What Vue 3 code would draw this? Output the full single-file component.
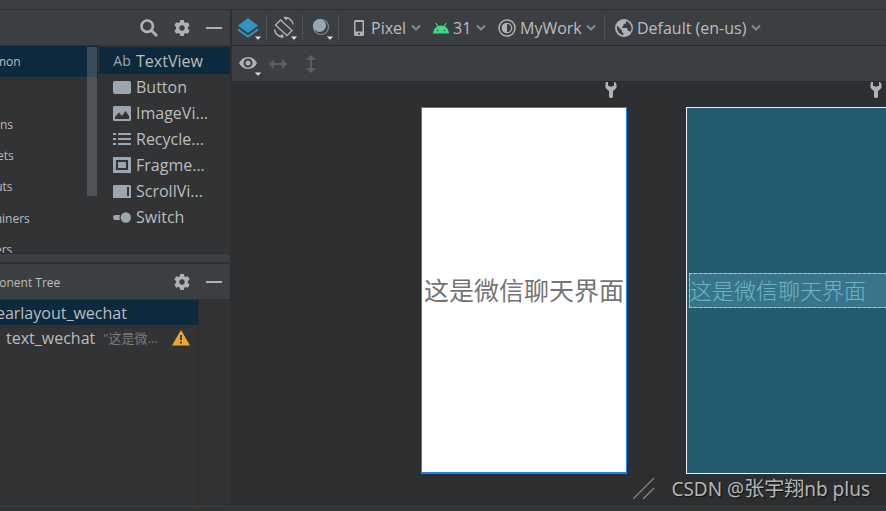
<script setup>
const categories = ['Common', 'Text', 'Buttons', 'Widgets', 'Layouts', 'Containers', 'Helpers']
const components = [
  { name: 'TextView', icon: 'text' },
  { name: 'Button', icon: 'button' },
  { name: 'ImageVi...', icon: 'image' },
  { name: 'Recycle...', icon: 'list' },
  { name: 'Fragme...', icon: 'fragment' },
  { name: 'ScrollVi...', icon: 'scroll' },
  { name: 'Switch', icon: 'switch' }
]
const gear =
  'M7 0h4l.5 2.6 1.6.9L15.600 2.600l2 3.500-2 1.700v2.400l2 1.700-2 3.500-2.500-.9-1.600.9L11 18H7l-.5-2.600-1.600-.9-2.500.9-2-3.500 2-1.700V7.800l-2-1.700 2-3.500 2.500.9 1.600-.9zM9 6a3 3 0 1 0 0 6 3 3 0 0 0 0-6z'
</script>

<template>
  <div class="ide">
    <div class="strip"></div>
    <div class="workspace">
      <aside class="side">
        <header class="head palette-head">
          <button class="tool" aria-label="Search">
            <svg width="18" height="18" viewBox="0 0 18 18"><circle cx="7.200" cy="7.200" r="5.700" fill="none" stroke="#afb1b3" stroke-width="2.600" /><path d="M11.500 11.500l5.500 5.500" stroke="#afb1b3" stroke-width="3" /></svg>
          </button>
          <button class="tool" aria-label="Palette settings">
            <svg width="16" height="16" viewBox="0 0 18 18"><path :d="gear" fill="#afb1b3" fill-rule="evenodd" /></svg>
          </button>
          <button class="tool" aria-label="Hide palette">
            <svg width="16" height="16" viewBox="0 0 16 16"><path d="M0 7h16v2H0z" fill="#afb1b3" /></svg>
          </button>
        </header>
        <div class="palette">
          <div class="categories">
            <ul class="category-list">
              <li v-for="(c, i) in categories" :key="c" :class="{ selected: i === 0 }">
                <button>{{ c }}</button>
              </li>
            </ul>
            <div class="thumb"></div>
          </div>
          <ul class="component-list">
            <li v-for="(c, i) in components" :key="c.name" :class="{ selected: i === 0 }">
              <button>
                <span v-if="c.icon === 'text'" class="ab">Ab</span>
                <svg v-else width="18" height="16" viewBox="0 0 18 16" fill="#9aa7b0">
                  <rect v-if="c.icon === 'button'" y="2" width="18" height="13" rx="2" />
                  <path v-else-if="c.icon === 'image'" fill-rule="evenodd" d="M1 1h16l1 1v13l-1 1H1l-1-1V2zM2 14h14v-3l-3.500-5-3.500 5-3-3.500L2 12z" />
                  <path v-else-if="c.icon === 'list'" d="M0 2h3v2H0zM5 2h13v2H5zM0 7h3v2H0zM5 7h13v2H5zM0 12h3v2H0zM5 12h13v2H5z" />
                  <path v-else-if="c.icon === 'fragment'" fill-rule="evenodd" d="M0 0h18v16H0zM3 3v10h12V3zM5 5h8v6H5z" />
                  <path v-else-if="c.icon === 'scroll'" fill-rule="evenodd" d="M1 2h16l1 1v12H0V3zM14 4v9h2V4z" />
                  <g v-else><circle cx="12.800" cy="8.500" r="5.200" /><path d="M2.500 6H7a7 7 0 0 0 0 5H2.500a2.500 2.500 0 0 1 0-5z" /></g>
                </svg>
                <span>{{ c.name }}</span>
              </button>
            </li>
          </ul>
        </div>
        <div class="splitter"></div>
        <header class="head tree-head">
          <h2>Component Tree</h2>
          <button class="tool" aria-label="Tree settings">
            <svg width="16" height="16" viewBox="0 0 18 18"><path :d="gear" fill="#afb1b3" fill-rule="evenodd" /></svg>
          </button>
          <button class="tool" aria-label="Hide tree">
            <svg width="16" height="16" viewBox="0 0 16 16"><path d="M0 7h16v2H0z" fill="#afb1b3" /></svg>
          </button>
        </header>
        <div class="tree">
          <ul class="nodes">
            <li class="selected root"><span>linearlayout_wechat</span></li>
            <li class="child">
              <span>text_wechat</span>
              <span class="hint">"这是微...</span>
              <svg class="warn" width="18" height="16" viewBox="0 0 18 16"><path d="M9 0l9 15.500H0z" fill="#f0a732" /><path d="M8 5h2v5H8zM8 11.500h2v2H8z" fill="#3c3f41" /></svg>
            </li>
          </ul>
        </div>
      </aside>

      <main class="editor">
        <div class="bar">
          <button class="pick" aria-label="Design surface">
            <svg width="26" height="26" viewBox="0 0 26 26"><path d="M11 2l10 7.500L11 17 1 9.500z" fill="#3592c4" /><path d="M1 13.500l10 7 10-7" fill="none" stroke="#3592c4" stroke-width="2" /><path d="M17 20h8l-4 4.500z" fill="#e0e0e0" stroke="#3c3f41" stroke-width="1" /></svg>
          </button>
          <i class="sep"></i>
          <button class="pick" aria-label="Orientation">
            <svg width="26" height="26" viewBox="0 0 26 26"><g fill="none" stroke="#afb1b3" stroke-width="1.400"><path d="M7.500 4l11.500 10.500-5 5L2.500 9z" /><path d="M11 1.800c4-.8 8.500 2 9.200 6.700M1.500 13.500c1 5 4.500 7.500 9 7" /></g><path d="M11 .5l5 1-3.500 3zM10.500 22l-4-1 3-3.500z" fill="#afb1b3" /><path d="M17 20h8l-4 4.500z" fill="#e0e0e0" stroke="#3c3f41" stroke-width="1" /></svg>
          </button>
          <i class="sep"></i>
          <button class="pick" aria-label="Night mode">
            <svg width="26" height="26" viewBox="0 0 26 26"><circle cx="12" cy="11" r="7.500" fill="none" stroke="#818a91" stroke-width="1.200" /><circle cx="10.500" cy="9.500" r="6.500" fill="#9aa7b0" /><path d="M17 20h8l-4 4.500z" fill="#e0e0e0" stroke="#3c3f41" stroke-width="1" /></svg>
          </button>
          <i class="sep"></i>
          <label class="choice device">
            <svg width="12" height="16" viewBox="0 0 12 16"><path fill="#afb1b3" fill-rule="evenodd" d="M2 0h8l1 1v14l-1 1H2l-1-1V1zM2.500 2v9.500h7V2zM5 13v1.500h2V13z" /></svg>
            <select aria-label="Device"><option>Pixel</option></select>
            <svg class="chev" width="10" height="8" viewBox="0 0 10 8"><path d="M1 1.500l4 4 4-4" fill="none" stroke="#7f8b91" stroke-width="2" /></svg>
          </label>
          <label class="choice api">
            <svg width="16" height="12" viewBox="0 0 16 12"><path d="M0 11.500a8 8 0 0 1 16 0z" fill="#3ddc84" /><path d="M3 1l2 4M13 1l-2 4" stroke="#3ddc84" stroke-width="1.200" /><circle cx="4.500" cy="8.500" r=".8" fill="#3c3f41" /><circle cx="11.500" cy="8.500" r=".8" fill="#3c3f41" /></svg>
            <select aria-label="API level"><option>31</option></select>
            <svg class="chev" width="10" height="8" viewBox="0 0 10 8"><path d="M1 1.500l4 4 4-4" fill="none" stroke="#7f8b91" stroke-width="2" /></svg>
          </label>
          <label class="choice theme">
            <svg width="18" height="18" viewBox="0 0 18 18"><circle cx="9" cy="9" r="8" fill="none" stroke="#afb1b3" stroke-width="1.500" /><circle cx="9" cy="9" r="4.700" fill="none" stroke="#afb1b3" stroke-width="1.200" /><path d="M9 4a5 5 0 0 0 0 10z" fill="#afb1b3" /></svg>
            <select aria-label="Theme"><option>MyWork</option></select>
            <svg class="chev" width="10" height="8" viewBox="0 0 10 8"><path d="M1 1.500l4 4 4-4" fill="none" stroke="#7f8b91" stroke-width="2" /></svg>
          </label>
          <i class="sep"></i>
          <label class="choice locale">
            <svg width="18" height="18" viewBox="0 0 18 18"><circle cx="9" cy="9" r="9" fill="#afb1b3" /><path d="M2 6.500l5 5v1.500l1.500 1.500V16C4 15.500 1.500 12 2 6.500zM11 2v2.500L8.500 5v2L7 8v1h5l1 3h1.500l1 1c2-3 1.500-8.500-4.500-11z" fill="#3c3f41" /></svg>
            <select aria-label="Locale"><option>Default (en-us)</option></select>
            <svg class="chev" width="10" height="8" viewBox="0 0 10 8"><path d="M1 1.500l4 4 4-4" fill="none" stroke="#7f8b91" stroke-width="2" /></svg>
          </label>
        </div>
        <div class="bar options">
          <button class="pick" aria-label="View options">
            <svg width="26" height="26" viewBox="0 0 26 26"><path d="M2 11c4-8 14-8 18 0-4 8-14 8-18 0z" fill="#afb1b3" /><circle cx="11" cy="11" r="3.500" fill="#afb1b3" stroke="#3c3f41" stroke-width="2" /><path d="M17 20h8l-4 4.500z" fill="#e0e0e0" stroke="#3c3f41" stroke-width="1" /></svg>
          </button>
          <button class="resize" aria-label="Expand horizontally">
            <svg width="18" height="18" viewBox="0 0 18 18"><path d="M0 9l5-5v4h8V4l5 5-5 5v-4H5v4z" fill="#5c5f61" /></svg>
          </button>
          <button class="resize" aria-label="Expand vertically">
            <svg width="18" height="18" viewBox="0 0 18 18"><path d="M9 0l5 5h-4v8h4l-5 5-5-5h4V5H4z" fill="#5c5f61" /></svg>
          </button>
        </div>
        <div class="canvas">
          <section class="board">
            <svg class="wrench" width="12" height="16" viewBox="0 0 12 16"><path d="M1 0h2v4h1.500l1.500 1 1.500-1H9V0h1l1.500 2v4L8 9v6l-1 1H5l-1-1V9L.5 6V2z" fill="#afb1b3" /></svg>
            <div class="screen design"><p>这是微信聊天界面</p></div>
          </section>
          <section class="board">
            <svg class="wrench" width="12" height="16" viewBox="0 0 12 16"><path d="M1 0h2v4h1.500l1.500 1 1.500-1H9V0h1l1.500 2v4L8 9v6l-1 1H5l-1-1V9L.5 6V2z" fill="#afb1b3" /></svg>
            <div class="screen blueprint"><p>这是微信聊天界面</p></div>
          </section>
          <div class="mark">
            <svg width="22" height="22" viewBox="0 0 22 22"><path d="M0 21L21 0M10 21l11-11" stroke="#8a8b8c" stroke-width="1.200" /></svg>
            <span>CSDN @<span class="han">张宇翔</span>nb plus</span>
          </div>
        </div>
      </main>
    </div>
    <footer class="status"></footer>
  </div>
</template>

<style>
body {
  background: #2d2e30;
}
</style>

<style scoped>
* {
  box-sizing: border-box;
}
.ide {
  display: flex;
  flex-direction: column;
  height: 100vh;
  overflow: hidden;
  background: #2b2b2b;
  color: #bbbdbf;
  font: 16px/20px "Open Sans", "Noto Sans CJK SC", sans-serif;
}
ul,
h2,
p {
  margin: 0;
  padding: 0;
  list-style: none;
  font-weight: 400;
}
button,
select {
  margin: 0;
  padding: 0;
  border: 0;
  background: none;
  color: inherit;
  font: inherit;
}
select {
  appearance: none;
}
svg {
  display: block;
  flex: none;
}
.strip {
  flex: none;
  height: 10px;
  background: #3c3f41;
  border-bottom: 1px solid #2e3032;
}
.workspace {
  display: flex;
  flex: 1;
  min-height: 0;
}
.side {
  display: flex;
  flex-direction: column;
  flex: none;
  width: 232px;
  background: #313335;
  border-right: 2px solid #2d2e30;
}
.head {
  display: flex;
  align-items: center;
  justify-content: flex-end;
  flex: none;
  gap: 16px;
  height: 36px;
  padding-right: 8px;
  background: #3c3f41;
  border-bottom: 1px solid #2e3032;
}
.palette {
  display: flex;
  flex: none;
  height: 208px;
  border-bottom: 1px solid #2b2b2b;
}
.categories {
  position: relative;
  width: 98px;
  overflow: hidden;
  font-size: 12px;
}
.category-list {
  display: grid;
  grid-template-rows: repeat(7, 1fr);
  height: 220px;
}
.category-list li {
  display: flex;
  align-items: center;
}
.category-list button {
  margin-left: -31px;
}
.selected {
  background: #0d293e;
}
.thumb {
  position: absolute;
  top: 1px;
  right: 1px;
  width: 10px;
  height: 149px;
  background: rgba(128, 132, 134, 0.4);
}
.component-list {
  flex: 1;
  margin-left: 1px;
  padding-top: 1px;
}
.component-list li {
  display: flex;
  height: 26px;
  padding-left: 14px;
}
.component-list .selected {
  height: 27px;
}
.component-list button {
  display: flex;
  align-items: center;
  gap: 5px;
}
.ab {
  width: 18px;
  color: #9aa7b0;
  font-size: 14px;
  font-weight: 500;
}
.splitter {
  flex: none;
  height: 10px;
  background: #3c3f41;
  border-bottom: 2px solid #2e3032;
}
.tree-head h2 {
  margin-left: -34px;
  margin-right: auto;
  padding-top: 2px;
  font-size: 12px;
}
.tree {
  display: flex;
  flex: 1;
}
.nodes {
  width: 199px;
  border-right: 1px solid #2b2b2b;
}
.nodes li {
  display: flex;
  align-items: center;
  height: 25px;
}
.root span {
  margin-left: -22px;
}
.child {
  padding: 0 8px 0 6px;
}
.hint {
  margin-left: 8px;
  color: #787a7c;
  font-size: 13px;
}
.warn {
  margin-left: auto;
}
.editor {
  display: flex;
  flex-direction: column;
  flex: 1;
  min-width: 0;
}
.bar {
  display: flex;
  align-items: center;
  flex: none;
  height: 36px;
  padding-left: 5px;
  background: #3c3f41;
  border-bottom: 1px solid #2b2b2b;
}
.sep {
  width: 1px;
  height: 25px;
  margin: 0 6px 0 3px;
  background: #515457;
}
.pick {
  padding-top: 2px;
}
.choice {
  display: flex;
  align-items: center;
  gap: 4px;
}
.device {
  margin-left: 8px;
}
.device select {
  margin-left: 2px;
}
.api,
.theme {
  margin-left: 12px;
}
.theme + .sep {
  margin-left: 8px;
}
.locale {
  margin-left: 4px;
}
.options .resize {
  margin-left: 6px;
}
.options .resize + .resize {
  margin-left: 15px;
}
.canvas {
  position: relative;
  display: flex;
  flex: 1;
  gap: 59px;
  padding-left: 189px;
  overflow: hidden;
  background: #2d2e30;
}
.board {
  flex: none;
  width: 206px;
}
.wrench {
  margin: 0 10px 9px auto;
}
.screen {
  display: flex;
  align-items: center;
  height: 367px;
}
.design {
  justify-content: center;
  border: 1px solid #1a84f5;
  border-bottom-width: 2px;
  background: #fff;
  color: #757575;
  font-size: 25px;
  line-height: 34px;
  white-space: nowrap;
}
.blueprint {
  padding-left: 2px;
  border: 1px solid #e8f2f4;
  background: #235c6f;
}
.blueprint p {
  flex: 1;
  border: 1px dashed #86d6e3;
  background:
    linear-gradient(#38758a, #38758a) padding-box,
    linear-gradient(#5ba9b9, #5ba9b9) border-box;
  color: #6ab6c8;
  font-size: 22px;
  font-weight: 300;
  line-height: 33px;
  white-space: nowrap;
}
.mark {
  position: absolute;
  right: 16px;
  bottom: 3px;
  display: flex;
  align-items: center;
  gap: 16px;
  color: #b4b5b6;
  font: 19px/28px "Noto Sans", "Noto Sans CJK SC", sans-serif;
  text-shadow: 1px 1px 1px #111;
}
.han {
  font-size: 20px;
}
.status {
  flex: none;
  height: 5px;
  background: #323335;
  border-top: 1px solid #3c3f41;
}
</style>
